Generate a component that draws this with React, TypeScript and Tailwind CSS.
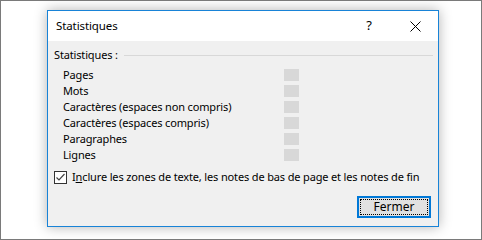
import React from "react";

const rows = [
  "Pages",
  "Mots",
  "Caractères (espaces non compris)",
  "Caractères (espaces compris)",
  "Paragraphes",
  "Lignes",
];

export default function App() {
  return (
    <div
      className="w-[482px] h-[240px] border border-[#7a7a7a] bg-white overflow-hidden text-[11px] tracking-[-0.15px] text-black"
      style={{ fontFamily: '"Noto Sans", "Liberation Sans", sans-serif' }}
    >
      <div className="ml-[46px] mt-[9px] w-[392px] h-[217px] border border-[#1883d7] bg-[#f0f0f0] shadow-[0_0_12px_rgba(0,0,0,0.3)] flex flex-col">
        {/* title bar */}
        <div className="h-[30px] bg-white flex items-center">
          <span className="pl-[8px] flex-1 text-[11.5px] tracking-[-0.1px]">Statistiques</span>
          <span className="w-[46px] text-center text-[13px]">?</span>
          <span className="w-[46px] flex justify-center">
            <svg width="11" height="11" viewBox="0 0 11 11">
              <path d="M0.5 0.5 L10.5 10.5 M10.5 0.5 L0.5 10.5" stroke="#000" strokeWidth="1" />
            </svg>
          </span>
        </div>

        {/* body */}
        <div className="flex-1 flex flex-col pt-[6px] pl-[6px] pr-[5px] whitespace-nowrap">
          <div className="flex items-center h-[16px] leading-[16px]">
            <span>Statistiques :</span>
            <div className="flex-1 ml-[6px] h-px bg-[#d8d8d8]" />
          </div>

          <div className="mt-[4px] flex flex-col">
            {rows.map((r) => (
              <div key={r} className="flex items-center h-[16px] leading-[16px]">
                <span className="pl-[9px] w-[230px]">{r}</span>
                <div className="w-[15px] h-[12px] bg-[#d8d8d8]" />
              </div>
            ))}
          </div>

          <div className="mt-[6px] flex items-center h-[16px] leading-[16px]">
            <div className="w-[13px] h-[13px] border border-[#333] bg-white flex items-center justify-center">
              <svg width="11" height="11" viewBox="0 0 11 11">
                <path d="M1.5 5.5 L4 8 L9.5 2" stroke="#444" strokeWidth="1.2" fill="none" />
              </svg>
            </div>
            <span className="ml-[5px]">
              I<span className="underline">n</span>clure les zones de texte, les notes de bas de page et les notes de fin
            </span>
          </div>

          <div className="mt-[11px] flex justify-end pr-[2px]">
            <div className="w-[74px] h-[22px] border-2 border-[#0078d7] bg-[#e1e1e1] p-[1px]">
              <div className="w-full h-full border border-dotted border-black flex items-center justify-center leading-none text-[12px] tracking-normal">
                Fermer
              </div>
            </div>
          </div>
        </div>
      </div>
    </div>
  );
}
